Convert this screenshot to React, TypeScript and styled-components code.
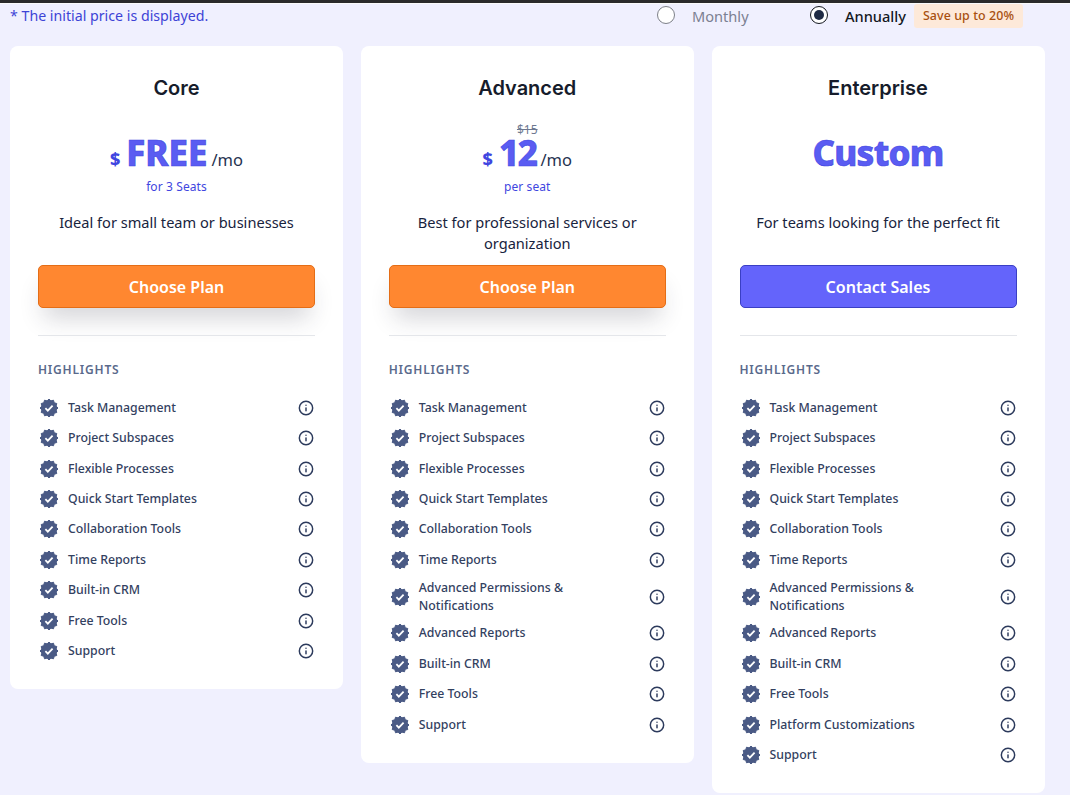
import { Info } from "lucide-react";
import styled, { createGlobalStyle } from "styled-components";

const GlobalStyle = createGlobalStyle`
  html, body {
    margin: 0;
    padding: 0;
    background: #f0f0fe;
    font-family: "Noto Sans", "Open Sans", sans-serif;
  }
  * { box-sizing: border-box; }
`;

type Plan = {
  name: string;
  price: string;
  tracking?: number;
  oldPrice?: string;
  caption?: string;
  description: string;
  action: string;
  sales?: boolean;
  features: string[];
};

const basics = [
  "Task Management",
  "Project Subspaces",
  "Flexible Processes",
  "Quick Start Templates",
  "Collaboration Tools",
  "Time Reports",
];

const plans: Plan[] = [
  {
    name: "Core",
    price: "FREE",
    caption: "for 3 Seats",
    description: "Ideal for small team or businesses",
    action: "Choose Plan",
    features: [...basics, "Built-in CRM", "Free Tools", "Support"],
  },
  {
    name: "Advanced",
    price: "12",
    tracking: -1.5,
    oldPrice: "$15",
    caption: "per seat",
    description: "Best for professional services or organization",
    action: "Choose Plan",
    features: [
      ...basics,
      "Advanced Permissions & Notifications",
      "Advanced Reports",
      "Built-in CRM",
      "Free Tools",
      "Support",
    ],
  },
  {
    name: "Enterprise",
    price: "Custom",
    tracking: -0.8,
    description: "For teams looking for the perfect fit",
    action: "Contact Sales",
    sales: true,
    features: [
      ...basics,
      "Advanced Permissions & Notifications",
      "Advanced Reports",
      "Built-in CRM",
      "Free Tools",
      "Platform Customizations",
      "Support",
    ],
  },
];

const Page = styled.div`
  width: 1070px;
  height: 795px;
  overflow: hidden;
  background: #f0f0fe;
`;

const TopEdge = styled.div`
  height: 4px;
  background: #2b2b2b;
  border-bottom: 1px solid #fafafa;
`;

const TopBar = styled.div`
  height: 42px;
  padding: 0 10px;
  display: flex;
  align-items: flex-start;
`;

const Note = styled.div`
  width: 647px;
  font-size: 14.2px;
  line-height: 24px;
  color: #3d43d6;
`;

const BillingOption = styled.label<{ $width: number }>`
  display: flex;
  align-items: center;
  gap: 17px;
  width: ${(p) => p.$width}px;
  height: 24px;
`;

const Radio = styled.span<{ $on?: boolean }>`
  width: 18px;
  height: 18px;
  margin-top: -3px;
  border-radius: 50%;
  background: #fff;
  border: ${(p) => (p.$on ? "1.5px solid #14181f" : "1px solid #7d8088")};
  display: flex;
  align-items: center;
  justify-content: center;

  &::after {
    content: "";
    display: ${(p) => (p.$on ? "block" : "none")};
    width: 10px;
    height: 10px;
    border-radius: 50%;
    background: #1e2a44;
  }
`;

const BillingLabel = styled.span<{ $on?: boolean }>`
  font-size: 14.6px;
  line-height: 24px;
  font-weight: ${(p) => (p.$on ? 500 : 400)};
  color: ${(p) => (p.$on ? "#14181f" : "#7b8092")};
`;

const SaveBadge = styled.span`
  width: 109px;
  height: 24px;
  border-radius: 3px;
  background: #fde9d9;
  color: #a8500f;
  font-size: 12.4px;
  font-weight: 500;
  letter-spacing: 0.1px;
  line-height: 24px;
  text-align: center;
`;

const Cards = styled.div`
  display: flex;
  align-items: flex-start;
  gap: 17.75px;
  padding-left: 10px;
`;

const Card = styled.section`
  width: 333px;
  padding: 30px 28px 23px;
  background: #fff;
  border-radius: 8px;
`;

const Title = styled.h2`
  margin: 0;
  font-family: Inter, sans-serif;
  font-size: 20px;
  font-weight: 600;
  line-height: 24px;
  text-align: center;
  color: #161c2b;
`;

const PriceBlock = styled.div`
  height: 112px;
  padding-top: 24px;
  display: flex;
  flex-direction: column;
  align-items: center;
`;

const OldPrice = styled.div`
  height: 12px;
  font-size: 12px;
  line-height: 12px;
  color: #6d7890;
  text-decoration: line-through;
`;

const PriceLine = styled.div`
  height: 34px;
  display: flex;
  align-items: baseline;
  justify-content: center;
  line-height: 34px;
`;

const Currency = styled.span`
  font-size: 18px;
  font-weight: 800;
  color: #3f46e0;
  margin-right: 6px;
`;

const Amount = styled.span<{ $tracking?: number }>`
  font-size: 35px;
  font-weight: 800;
  letter-spacing: ${(p) => p.$tracking ?? 0}px;
  color: #5a5cf2;
  -webkit-text-stroke: 0.6px #3f46e0;
`;

const Period = styled.span`
  margin-left: 4px;
  font-size: 16.5px;
  color: #25324f;
`;

const Caption = styled.div`
  margin-top: 8px;
  font-size: 12px;
  letter-spacing: 0.1px;
  line-height: 18px;
  color: #3f46e0;
`;

const Description = styled.p`
  margin: 0 0 11px;
  min-height: 42px;
  font-size: 14.6px;
  line-height: 21px;
  text-align: center;
  color: #18233d;
`;

const ActionButton = styled.button<{ $sales?: boolean }>`
  display: block;
  width: 100%;
  height: 43px;
  border-radius: 5px;
  border: 1px solid ${(p) => (p.$sales ? "#3a3fc4" : "#e46d16")};
  background: ${(p) => (p.$sales ? "#6464fb" : "#ff8730")};
  color: #fff;
  font-family: inherit;
  font-size: 16px;
  font-weight: 600;
  box-shadow: ${(p) => (p.$sales ? "none" : "0 16px 24px -6px rgba(40, 40, 60, 0.2)")};
`;

const Divider = styled.hr`
  margin: 27px 0 0;
  border: 0;
  border-top: 1px solid #e4e6ea;
`;

const SectionLabel = styled.div`
  margin: 25px 0 13.5px;
  font-size: 12px;
  font-weight: 600;
  letter-spacing: 0.8px;
  line-height: 18px;
  color: #5a6a8c;
`;

const FeatureList = styled.ul`
  list-style: none;
  margin: 0;
  padding: 0;
`;

const Feature = styled.li`
  display: flex;
  align-items: center;
  min-height: 30.45px;
  padding: 3.5px 1px 3.5px 2px;
`;

const FeatureText = styled.span`
  flex: 1;
  max-width: 176px;
  margin: 0 auto 0 10px;
  font-size: 12.3px;
  font-weight: 500;
  line-height: 18px;
  color: #33415f;
`;

const InfoIcon = styled(Info)`
  flex: none;
  width: 16px;
  height: 16px;
  color: #2c3a5c;
`;

// scalloped seal behind the check mark
const sealPoints = Array.from({ length: 24 }, (_, i) => {
  const r = i % 2 === 0 ? 9 : 7.4;
  const a = (i * Math.PI) / 12;
  return `${(9 + r * Math.sin(a)).toFixed(2)},${(9 - r * Math.cos(a)).toFixed(2)}`;
}).join(" ");

const Seal = () => (
  <svg width="18" height="18" viewBox="0 0 18 18" style={{ flex: "none" }}>
    <polygon points={sealPoints} fill="#4a5a85" stroke="#4a5a85" strokeLinejoin="round" />
    <path d="M5.4 9.2l2.4 2.4 4.8-4.9" fill="none" stroke="#fff" strokeWidth="1.8" />
  </svg>
);

const PlanCard = ({ plan }: { plan: Plan }) => {
  const isCustom = plan.price === "Custom";
  return (
    <Card>
      <Title>{plan.name}</Title>
      <PriceBlock>
        <OldPrice>{plan.oldPrice}</OldPrice>
        <PriceLine>
          {!isCustom && <Currency>$</Currency>}
          <Amount $tracking={plan.tracking}>{plan.price}</Amount>
          {!isCustom && <Period>/mo</Period>}
        </PriceLine>
        {plan.caption && <Caption>{plan.caption}</Caption>}
      </PriceBlock>
      <Description>{plan.description}</Description>
      <ActionButton $sales={plan.sales}>{plan.action}</ActionButton>
      <Divider />
      <SectionLabel>HIGHLIGHTS</SectionLabel>
      <FeatureList>
        {plan.features.map((f) => (
          <Feature key={f}>
            <Seal />
            <FeatureText>{f}</FeatureText>
            <InfoIcon strokeWidth={2.2} />
          </Feature>
        ))}
      </FeatureList>
    </Card>
  );
};

export default function App() {
  return (
    <Page>
      <GlobalStyle />
      <TopEdge />
      <TopBar>
        <Note>* The initial price is displayed.</Note>
        <BillingOption $width={153}>
          <Radio />
          <BillingLabel>Monthly</BillingLabel>
        </BillingOption>
        <BillingOption $width={104}>
          <Radio $on />
          <BillingLabel $on>Annually</BillingLabel>
        </BillingOption>
        <SaveBadge>Save up to 20%</SaveBadge>
      </TopBar>
      <Cards>
        {plans.map((p) => (
          <PlanCard key={p.name} plan={p} />
        ))}
      </Cards>
    </Page>
  );
}
